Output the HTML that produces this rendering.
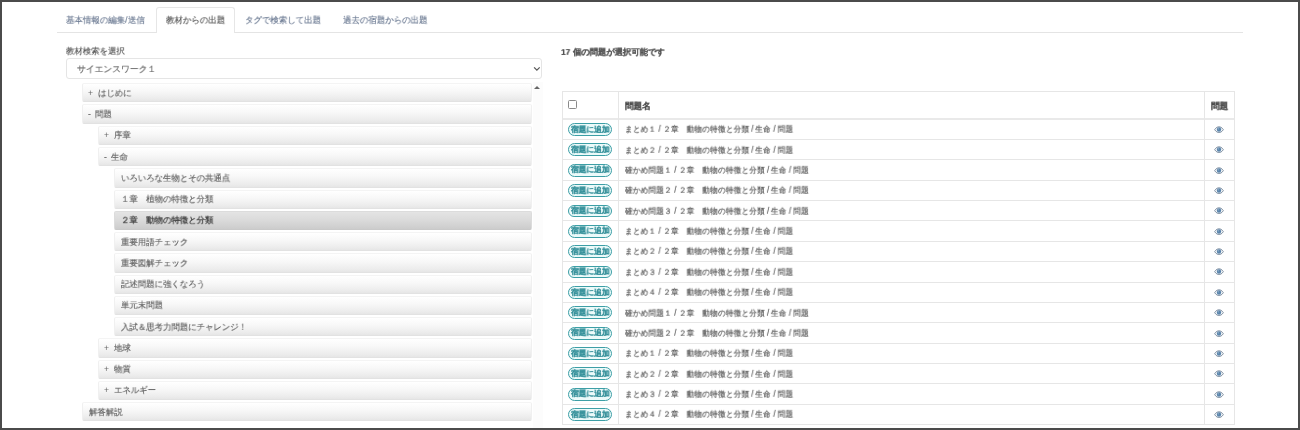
<!DOCTYPE html><html><head><meta charset="utf-8"><style>
*{box-sizing:border-box;margin:0;padding:0}
html,body{width:1300px;height:430px;overflow:hidden;background:#fff}
body{font-family:"Liberation Sans",sans-serif;position:relative;color:#555}
#frame{position:absolute;left:0;top:0;width:1300px;height:430px;border:2px solid #4b4b4b;z-index:10}
.a{position:absolute;white-space:nowrap;line-height:12px}
.a svg{display:block}
.tx{display:block;transform-origin:0 50%;white-space:nowrap;line-height:12px;will-change:transform;-webkit-text-stroke:0.15px currentColor}
#tabline{position:absolute;left:57px;top:32px;width:1186px;height:1px;background:#e4e4e4}

#acttab{position:absolute;left:156.4px;top:7.4px;width:78.2px;height:25.6px;border:1px solid #e6e6e6;border-bottom:none;border-radius:3px 3px 0 0;background:#fff}
#sel{position:absolute;left:66px;top:57.5px;width:476px;height:21px;border:1px solid #e5e5e5;border-radius:3px;background:#fff}
.item{position:absolute;height:19.3px;right:768.4px;border-radius:2px;border:1px solid #f0f0f0;border-top-color:#f4f4f4;border-bottom-color:#e2e2e2;
 background:linear-gradient(#ffffff,#f8f8f8 40%,#ececec 85%,#e6e6e6)}
.item.sel{background:linear-gradient(#e4e4e4,#dadada 50%,#cccccc);border-color:#dcdcdc;border-bottom-color:#c9c9c9}
#track{position:absolute;left:532.5px;top:82px;width:10px;height:346px;background:#fcfcfc}
#scrollup{position:absolute;left:533.8px;top:85.6px;width:0;height:0;border-left:3.2px solid transparent;border-right:3.2px solid transparent;border-bottom:3.4px solid #666}
.hl{position:absolute;height:1px;background:#e6e6e6}
.vl{position:absolute;width:1px;background:#e6e6e6}
.cb{position:absolute;left:568px;top:100.1px;width:9px;height:9px;border:1px solid #8a8a8a;border-radius:1.5px}
.btn{position:absolute;left:568.4px;width:43.5px;height:12.8px;border:1.7px solid #3d9fa6;border-radius:7px;background:#ecfafa}
</style></head><body>
<div id="frame"></div>
<div id="tabline"></div><div id="acttab"></div>
<div class="a" style="left:66.45px;top:14px;color:#67768f"><span class="tx" style="font-size:9px;transform:scale(0.9389,0.9389)">基本情報の編集/送信</span></div>
<div class="a" style="left:165.92px;top:14px;color:#555"><span class="tx" style="font-size:9px;transform:scale(0.9389,0.9389)">教材からの出題</span></div>
<div class="a" style="left:245.10px;top:14px;color:#67768f"><span class="tx" style="font-size:9px;transform:scale(0.9389,0.9389)">タグで検索して出題</span></div>
<div class="a" style="left:342.75px;top:14px;color:#67768f"><span class="tx" style="font-size:9px;transform:scale(0.9389,0.9389)">過去の宿題からの出題</span></div>
<div class="a" style="left:65.72px;top:45px;color:#555"><span class="tx" style="font-size:9px;transform:scale(0.9333,0.9333)">教材検索を選択</span></div>
<div id="sel"></div>
<div class="a" style="left:76.95px;top:62.6px;color:#6a6a6a"><span class="tx" style="font-size:9px;transform:scale(0.9778,0.9778)">サイエンスワーク１</span></div>
<svg class="a" style="left:532.5px;top:65.5px" width="8" height="6" viewBox="0 0 8 6"><path d="M1.1 1.4 L3.9 4.1 L6.7 1.4" fill="none" stroke="#5a5a5a" stroke-width="1.3"/></svg>
<div class="item" style="left:82px;top:83.20px"></div>
<div class="a" style="left:87.60px;top:86.80px;color:#666"><span class="tx" style="font-size:9px;transform:scale(0.9333,0.9333);-webkit-text-stroke:0.05px #666">+</span></div>
<div class="a" style="left:97.50px;top:86.80px;color:#5c5c5c"><span class="tx" style="font-size:9px;transform:scale(0.9333,0.9333)">はじめに</span></div>
<div class="item" style="left:82px;top:104.46px"></div>
<div class="a" style="left:87.60px;top:108.06px;color:#666"><span class="tx" style="font-size:9px;transform:scale(0.9333,0.9333);-webkit-text-stroke:0.05px #666">-</span></div>
<div class="a" style="left:94.50px;top:108.06px;color:#5c5c5c"><span class="tx" style="font-size:9px;transform:scale(0.9333,0.9333)">問題</span></div>
<div class="item" style="left:98px;top:125.72px"></div>
<div class="a" style="left:103.60px;top:129.32px;color:#666"><span class="tx" style="font-size:9px;transform:scale(0.9333,0.9333);-webkit-text-stroke:0.05px #666">+</span></div>
<div class="a" style="left:113.50px;top:129.32px;color:#5c5c5c"><span class="tx" style="font-size:9px;transform:scale(0.9333,0.9333)">序章</span></div>
<div class="item" style="left:98px;top:146.98px"></div>
<div class="a" style="left:103.60px;top:150.58px;color:#666"><span class="tx" style="font-size:9px;transform:scale(0.9333,0.9333);-webkit-text-stroke:0.05px #666">-</span></div>
<div class="a" style="left:110.50px;top:150.58px;color:#5c5c5c"><span class="tx" style="font-size:9px;transform:scale(0.9333,0.9333)">生命</span></div>
<div class="item" style="left:114px;top:168.24px"></div>
<div class="a" style="left:121.00px;top:171.84px;color:#5c5c5c"><span class="tx" style="font-size:9px;transform:scale(0.9333,0.9333)">いろいろな生物とその共通点</span></div>
<div class="item" style="left:114px;top:189.50px"></div>
<div class="a" style="left:121.00px;top:193.10px;color:#5c5c5c"><span class="tx" style="font-size:9px;transform:scale(0.9333,0.9333)">１章　植物の特徴と分類</span></div>
<div class="item sel" style="left:114px;top:210.76px"></div>
<div class="a" style="left:121.00px;top:214.36px;color:#4a4a4a"><span class="tx" style="font-size:9px;transform:scale(0.9333,0.9333);font-weight:bold;-webkit-text-stroke:0">２章　動物の特徴と分類</span></div>
<div class="item" style="left:114px;top:232.02px"></div>
<div class="a" style="left:121.00px;top:235.62px;color:#5c5c5c"><span class="tx" style="font-size:9px;transform:scale(0.9333,0.9333)">重要用語チェック</span></div>
<div class="item" style="left:114px;top:253.28px"></div>
<div class="a" style="left:121.00px;top:256.88px;color:#5c5c5c"><span class="tx" style="font-size:9px;transform:scale(0.9333,0.9333)">重要図解チェック</span></div>
<div class="item" style="left:114px;top:274.54px"></div>
<div class="a" style="left:121.00px;top:278.14px;color:#5c5c5c"><span class="tx" style="font-size:9px;transform:scale(0.9333,0.9333)">記述問題に強くなろう</span></div>
<div class="item" style="left:114px;top:295.80px"></div>
<div class="a" style="left:121.00px;top:299.40px;color:#5c5c5c"><span class="tx" style="font-size:9px;transform:scale(0.9333,0.9333)">単元末問題</span></div>
<div class="item" style="left:114px;top:317.06px"></div>
<div class="a" style="left:121.00px;top:320.66px;color:#5c5c5c"><span class="tx" style="font-size:9px;transform:scale(0.9333,0.9333)">入試＆思考力問題にチャレンジ！</span></div>
<div class="item" style="left:98px;top:338.32px"></div>
<div class="a" style="left:103.60px;top:341.92px;color:#666"><span class="tx" style="font-size:9px;transform:scale(0.9333,0.9333);-webkit-text-stroke:0.05px #666">+</span></div>
<div class="a" style="left:113.50px;top:341.92px;color:#5c5c5c"><span class="tx" style="font-size:9px;transform:scale(0.9333,0.9333)">地球</span></div>
<div class="item" style="left:98px;top:359.58px"></div>
<div class="a" style="left:103.60px;top:363.18px;color:#666"><span class="tx" style="font-size:9px;transform:scale(0.9333,0.9333);-webkit-text-stroke:0.05px #666">+</span></div>
<div class="a" style="left:113.50px;top:363.18px;color:#5c5c5c"><span class="tx" style="font-size:9px;transform:scale(0.9333,0.9333)">物質</span></div>
<div class="item" style="left:98px;top:380.84px"></div>
<div class="a" style="left:103.60px;top:384.44px;color:#666"><span class="tx" style="font-size:9px;transform:scale(0.9333,0.9333);-webkit-text-stroke:0.05px #666">+</span></div>
<div class="a" style="left:113.50px;top:384.44px;color:#5c5c5c"><span class="tx" style="font-size:9px;transform:scale(0.9333,0.9333)">エネルギー</span></div>
<div class="item" style="left:82px;top:402.10px"></div>
<div class="a" style="left:89.00px;top:405.70px;color:#5c5c5c"><span class="tx" style="font-size:9px;transform:scale(0.9333,0.9333)">解答解説</span></div>
<div id="track"></div><div id="scrollup"></div>
<div class="a" style="left:560.80px;top:46.2px;color:#555;font-weight:bold"><span class="tx" style="font-size:9px;transform:scale(0.9256,0.9256)"><span style="color:#333">17</span> 個の問題が選択可能です</span></div>
<div class="hl" style="left:561.5px;top:91.3px;width:673.0999999999999px"></div>
<div class="hl" style="left:561.5px;top:117.9px;width:673.0999999999999px;height:1.8px;background:#e9e9e9"></div>
<div class="hl" style="left:561.5px;top:139.00px;width:673.0999999999999px"></div>
<div class="hl" style="left:561.5px;top:159.37px;width:673.0999999999999px"></div>
<div class="hl" style="left:561.5px;top:179.74px;width:673.0999999999999px"></div>
<div class="hl" style="left:561.5px;top:200.11px;width:673.0999999999999px"></div>
<div class="hl" style="left:561.5px;top:220.48px;width:673.0999999999999px"></div>
<div class="hl" style="left:561.5px;top:240.85px;width:673.0999999999999px"></div>
<div class="hl" style="left:561.5px;top:261.22px;width:673.0999999999999px"></div>
<div class="hl" style="left:561.5px;top:281.59px;width:673.0999999999999px"></div>
<div class="hl" style="left:561.5px;top:301.96px;width:673.0999999999999px"></div>
<div class="hl" style="left:561.5px;top:322.33px;width:673.0999999999999px"></div>
<div class="hl" style="left:561.5px;top:342.70px;width:673.0999999999999px"></div>
<div class="hl" style="left:561.5px;top:363.07px;width:673.0999999999999px"></div>
<div class="hl" style="left:561.5px;top:383.44px;width:673.0999999999999px"></div>
<div class="hl" style="left:561.5px;top:403.81px;width:673.0999999999999px"></div>
<div class="hl" style="left:561.5px;top:424.18px;width:673.0999999999999px"></div>
<div class="vl" style="left:561.5px;top:91.3px;height:333.88px"></div>
<div class="vl" style="left:618.0px;top:91.3px;height:333.88px"></div>
<div class="vl" style="left:1204.0px;top:91.3px;height:333.88px"></div>
<div class="vl" style="left:1233.6px;top:91.3px;height:333.88px"></div>
<div class="cb"></div>
<div class="a" style="left:625.27px;top:100px;color:#4a4a4a;font-weight:bold"><span class="tx" style="font-size:9px;transform:scale(0.9556,0.9556);-webkit-text-stroke:0.05px #4a4a4a">問題名</span></div>
<div class="a" style="left:1210.57px;top:100px;color:#4a4a4a;font-weight:bold"><span class="tx" style="font-size:9px;transform:scale(0.9556,0.9556);-webkit-text-stroke:0.05px #4a4a4a">問題</span></div>
<div class="btn" style="top:123.03px"></div>
<div class="a" style="left:571px;top:123.63px;color:#35909a;font-weight:bold"><span class="tx" style="font-size:8px;transform:scale(0.9650,0.9650);-webkit-text-stroke:0.15px #35909a">宿題に追加</span></div>
<div class="a" style="left:624.7px;top:124.23px;color:#555"><span class="tx" style="font-size:8px;transform:scale(0.9788,1.0375);-webkit-text-stroke:0.16px #555">まとめ１ / ２章　動物の特徴と分類 / 生命 / 問題</span></div>
<div class="a" style="left:1214.2px;top:125.83px"><svg width="10" height="7.3" viewBox="0 0 11 8"><path d="M0.7 4 C2.6 1.2 4.2 0.9 5.5 0.9 C6.8 0.9 8.4 1.2 10.3 4 C8.4 6.8 6.8 7.1 5.5 7.1 C4.2 7.1 2.6 6.8 0.7 4Z" fill="#f4f7fa" stroke="#8393a4" stroke-width="1.1"/><circle cx="5.5" cy="3.8" r="2.4" fill="#5a84ab"/><circle cx="4.8" cy="3.1" r="0.7" fill="#9db6cc"/></svg></div>
<div class="btn" style="top:143.40px"></div>
<div class="a" style="left:571px;top:144.00px;color:#35909a;font-weight:bold"><span class="tx" style="font-size:8px;transform:scale(0.9650,0.9650);-webkit-text-stroke:0.15px #35909a">宿題に追加</span></div>
<div class="a" style="left:624.7px;top:144.60px;color:#555"><span class="tx" style="font-size:8px;transform:scale(0.9788,1.0375);-webkit-text-stroke:0.16px #555">まとめ２ / ２章　動物の特徴と分類 / 生命 / 問題</span></div>
<div class="a" style="left:1214.2px;top:146.20px"><svg width="10" height="7.3" viewBox="0 0 11 8"><path d="M0.7 4 C2.6 1.2 4.2 0.9 5.5 0.9 C6.8 0.9 8.4 1.2 10.3 4 C8.4 6.8 6.8 7.1 5.5 7.1 C4.2 7.1 2.6 6.8 0.7 4Z" fill="#f4f7fa" stroke="#8393a4" stroke-width="1.1"/><circle cx="5.5" cy="3.8" r="2.4" fill="#5a84ab"/><circle cx="4.8" cy="3.1" r="0.7" fill="#9db6cc"/></svg></div>
<div class="btn" style="top:163.77px"></div>
<div class="a" style="left:571px;top:164.37px;color:#35909a;font-weight:bold"><span class="tx" style="font-size:8px;transform:scale(0.9650,0.9650);-webkit-text-stroke:0.15px #35909a">宿題に追加</span></div>
<div class="a" style="left:624.7px;top:164.97px;color:#555"><span class="tx" style="font-size:8px;transform:scale(0.9788,1.0375);-webkit-text-stroke:0.16px #555">確かめ問題１ / ２章　動物の特徴と分類 / 生命 / 問題</span></div>
<div class="a" style="left:1214.2px;top:166.57px"><svg width="10" height="7.3" viewBox="0 0 11 8"><path d="M0.7 4 C2.6 1.2 4.2 0.9 5.5 0.9 C6.8 0.9 8.4 1.2 10.3 4 C8.4 6.8 6.8 7.1 5.5 7.1 C4.2 7.1 2.6 6.8 0.7 4Z" fill="#f4f7fa" stroke="#8393a4" stroke-width="1.1"/><circle cx="5.5" cy="3.8" r="2.4" fill="#5a84ab"/><circle cx="4.8" cy="3.1" r="0.7" fill="#9db6cc"/></svg></div>
<div class="btn" style="top:184.14px"></div>
<div class="a" style="left:571px;top:184.74px;color:#35909a;font-weight:bold"><span class="tx" style="font-size:8px;transform:scale(0.9650,0.9650);-webkit-text-stroke:0.15px #35909a">宿題に追加</span></div>
<div class="a" style="left:624.7px;top:185.34px;color:#555"><span class="tx" style="font-size:8px;transform:scale(0.9788,1.0375);-webkit-text-stroke:0.16px #555">確かめ問題２ / ２章　動物の特徴と分類 / 生命 / 問題</span></div>
<div class="a" style="left:1214.2px;top:186.94px"><svg width="10" height="7.3" viewBox="0 0 11 8"><path d="M0.7 4 C2.6 1.2 4.2 0.9 5.5 0.9 C6.8 0.9 8.4 1.2 10.3 4 C8.4 6.8 6.8 7.1 5.5 7.1 C4.2 7.1 2.6 6.8 0.7 4Z" fill="#f4f7fa" stroke="#8393a4" stroke-width="1.1"/><circle cx="5.5" cy="3.8" r="2.4" fill="#5a84ab"/><circle cx="4.8" cy="3.1" r="0.7" fill="#9db6cc"/></svg></div>
<div class="btn" style="top:204.51px"></div>
<div class="a" style="left:571px;top:205.11px;color:#35909a;font-weight:bold"><span class="tx" style="font-size:8px;transform:scale(0.9650,0.9650);-webkit-text-stroke:0.15px #35909a">宿題に追加</span></div>
<div class="a" style="left:624.7px;top:205.71px;color:#555"><span class="tx" style="font-size:8px;transform:scale(0.9788,1.0375);-webkit-text-stroke:0.16px #555">確かめ問題３ / ２章　動物の特徴と分類 / 生命 / 問題</span></div>
<div class="a" style="left:1214.2px;top:207.31px"><svg width="10" height="7.3" viewBox="0 0 11 8"><path d="M0.7 4 C2.6 1.2 4.2 0.9 5.5 0.9 C6.8 0.9 8.4 1.2 10.3 4 C8.4 6.8 6.8 7.1 5.5 7.1 C4.2 7.1 2.6 6.8 0.7 4Z" fill="#f4f7fa" stroke="#8393a4" stroke-width="1.1"/><circle cx="5.5" cy="3.8" r="2.4" fill="#5a84ab"/><circle cx="4.8" cy="3.1" r="0.7" fill="#9db6cc"/></svg></div>
<div class="btn" style="top:224.88px"></div>
<div class="a" style="left:571px;top:225.48px;color:#35909a;font-weight:bold"><span class="tx" style="font-size:8px;transform:scale(0.9650,0.9650);-webkit-text-stroke:0.15px #35909a">宿題に追加</span></div>
<div class="a" style="left:624.7px;top:226.08px;color:#555"><span class="tx" style="font-size:8px;transform:scale(0.9788,1.0375);-webkit-text-stroke:0.16px #555">まとめ１ / ２章　動物の特徴と分類 / 生命 / 問題</span></div>
<div class="a" style="left:1214.2px;top:227.68px"><svg width="10" height="7.3" viewBox="0 0 11 8"><path d="M0.7 4 C2.6 1.2 4.2 0.9 5.5 0.9 C6.8 0.9 8.4 1.2 10.3 4 C8.4 6.8 6.8 7.1 5.5 7.1 C4.2 7.1 2.6 6.8 0.7 4Z" fill="#f4f7fa" stroke="#8393a4" stroke-width="1.1"/><circle cx="5.5" cy="3.8" r="2.4" fill="#5a84ab"/><circle cx="4.8" cy="3.1" r="0.7" fill="#9db6cc"/></svg></div>
<div class="btn" style="top:245.25px"></div>
<div class="a" style="left:571px;top:245.85px;color:#35909a;font-weight:bold"><span class="tx" style="font-size:8px;transform:scale(0.9650,0.9650);-webkit-text-stroke:0.15px #35909a">宿題に追加</span></div>
<div class="a" style="left:624.7px;top:246.45px;color:#555"><span class="tx" style="font-size:8px;transform:scale(0.9788,1.0375);-webkit-text-stroke:0.16px #555">まとめ２ / ２章　動物の特徴と分類 / 生命 / 問題</span></div>
<div class="a" style="left:1214.2px;top:248.05px"><svg width="10" height="7.3" viewBox="0 0 11 8"><path d="M0.7 4 C2.6 1.2 4.2 0.9 5.5 0.9 C6.8 0.9 8.4 1.2 10.3 4 C8.4 6.8 6.8 7.1 5.5 7.1 C4.2 7.1 2.6 6.8 0.7 4Z" fill="#f4f7fa" stroke="#8393a4" stroke-width="1.1"/><circle cx="5.5" cy="3.8" r="2.4" fill="#5a84ab"/><circle cx="4.8" cy="3.1" r="0.7" fill="#9db6cc"/></svg></div>
<div class="btn" style="top:265.62px"></div>
<div class="a" style="left:571px;top:266.22px;color:#35909a;font-weight:bold"><span class="tx" style="font-size:8px;transform:scale(0.9650,0.9650);-webkit-text-stroke:0.15px #35909a">宿題に追加</span></div>
<div class="a" style="left:624.7px;top:266.82px;color:#555"><span class="tx" style="font-size:8px;transform:scale(0.9788,1.0375);-webkit-text-stroke:0.16px #555">まとめ３ / ２章　動物の特徴と分類 / 生命 / 問題</span></div>
<div class="a" style="left:1214.2px;top:268.42px"><svg width="10" height="7.3" viewBox="0 0 11 8"><path d="M0.7 4 C2.6 1.2 4.2 0.9 5.5 0.9 C6.8 0.9 8.4 1.2 10.3 4 C8.4 6.8 6.8 7.1 5.5 7.1 C4.2 7.1 2.6 6.8 0.7 4Z" fill="#f4f7fa" stroke="#8393a4" stroke-width="1.1"/><circle cx="5.5" cy="3.8" r="2.4" fill="#5a84ab"/><circle cx="4.8" cy="3.1" r="0.7" fill="#9db6cc"/></svg></div>
<div class="btn" style="top:285.99px"></div>
<div class="a" style="left:571px;top:286.59px;color:#35909a;font-weight:bold"><span class="tx" style="font-size:8px;transform:scale(0.9650,0.9650);-webkit-text-stroke:0.15px #35909a">宿題に追加</span></div>
<div class="a" style="left:624.7px;top:287.19px;color:#555"><span class="tx" style="font-size:8px;transform:scale(0.9788,1.0375);-webkit-text-stroke:0.16px #555">まとめ４ / ２章　動物の特徴と分類 / 生命 / 問題</span></div>
<div class="a" style="left:1214.2px;top:288.79px"><svg width="10" height="7.3" viewBox="0 0 11 8"><path d="M0.7 4 C2.6 1.2 4.2 0.9 5.5 0.9 C6.8 0.9 8.4 1.2 10.3 4 C8.4 6.8 6.8 7.1 5.5 7.1 C4.2 7.1 2.6 6.8 0.7 4Z" fill="#f4f7fa" stroke="#8393a4" stroke-width="1.1"/><circle cx="5.5" cy="3.8" r="2.4" fill="#5a84ab"/><circle cx="4.8" cy="3.1" r="0.7" fill="#9db6cc"/></svg></div>
<div class="btn" style="top:306.36px"></div>
<div class="a" style="left:571px;top:306.96px;color:#35909a;font-weight:bold"><span class="tx" style="font-size:8px;transform:scale(0.9650,0.9650);-webkit-text-stroke:0.15px #35909a">宿題に追加</span></div>
<div class="a" style="left:624.7px;top:307.56px;color:#555"><span class="tx" style="font-size:8px;transform:scale(0.9788,1.0375);-webkit-text-stroke:0.16px #555">確かめ問題１ / ２章　動物の特徴と分類 / 生命 / 問題</span></div>
<div class="a" style="left:1214.2px;top:309.16px"><svg width="10" height="7.3" viewBox="0 0 11 8"><path d="M0.7 4 C2.6 1.2 4.2 0.9 5.5 0.9 C6.8 0.9 8.4 1.2 10.3 4 C8.4 6.8 6.8 7.1 5.5 7.1 C4.2 7.1 2.6 6.8 0.7 4Z" fill="#f4f7fa" stroke="#8393a4" stroke-width="1.1"/><circle cx="5.5" cy="3.8" r="2.4" fill="#5a84ab"/><circle cx="4.8" cy="3.1" r="0.7" fill="#9db6cc"/></svg></div>
<div class="btn" style="top:326.73px"></div>
<div class="a" style="left:571px;top:327.33px;color:#35909a;font-weight:bold"><span class="tx" style="font-size:8px;transform:scale(0.9650,0.9650);-webkit-text-stroke:0.15px #35909a">宿題に追加</span></div>
<div class="a" style="left:624.7px;top:327.93px;color:#555"><span class="tx" style="font-size:8px;transform:scale(0.9788,1.0375);-webkit-text-stroke:0.16px #555">確かめ問題２ / ２章　動物の特徴と分類 / 生命 / 問題</span></div>
<div class="a" style="left:1214.2px;top:329.53px"><svg width="10" height="7.3" viewBox="0 0 11 8"><path d="M0.7 4 C2.6 1.2 4.2 0.9 5.5 0.9 C6.8 0.9 8.4 1.2 10.3 4 C8.4 6.8 6.8 7.1 5.5 7.1 C4.2 7.1 2.6 6.8 0.7 4Z" fill="#f4f7fa" stroke="#8393a4" stroke-width="1.1"/><circle cx="5.5" cy="3.8" r="2.4" fill="#5a84ab"/><circle cx="4.8" cy="3.1" r="0.7" fill="#9db6cc"/></svg></div>
<div class="btn" style="top:347.10px"></div>
<div class="a" style="left:571px;top:347.70px;color:#35909a;font-weight:bold"><span class="tx" style="font-size:8px;transform:scale(0.9650,0.9650);-webkit-text-stroke:0.15px #35909a">宿題に追加</span></div>
<div class="a" style="left:624.7px;top:348.30px;color:#555"><span class="tx" style="font-size:8px;transform:scale(0.9788,1.0375);-webkit-text-stroke:0.16px #555">まとめ１ / ２章　動物の特徴と分類 / 生命 / 問題</span></div>
<div class="a" style="left:1214.2px;top:349.90px"><svg width="10" height="7.3" viewBox="0 0 11 8"><path d="M0.7 4 C2.6 1.2 4.2 0.9 5.5 0.9 C6.8 0.9 8.4 1.2 10.3 4 C8.4 6.8 6.8 7.1 5.5 7.1 C4.2 7.1 2.6 6.8 0.7 4Z" fill="#f4f7fa" stroke="#8393a4" stroke-width="1.1"/><circle cx="5.5" cy="3.8" r="2.4" fill="#5a84ab"/><circle cx="4.8" cy="3.1" r="0.7" fill="#9db6cc"/></svg></div>
<div class="btn" style="top:367.47px"></div>
<div class="a" style="left:571px;top:368.07px;color:#35909a;font-weight:bold"><span class="tx" style="font-size:8px;transform:scale(0.9650,0.9650);-webkit-text-stroke:0.15px #35909a">宿題に追加</span></div>
<div class="a" style="left:624.7px;top:368.67px;color:#555"><span class="tx" style="font-size:8px;transform:scale(0.9788,1.0375);-webkit-text-stroke:0.16px #555">まとめ２ / ２章　動物の特徴と分類 / 生命 / 問題</span></div>
<div class="a" style="left:1214.2px;top:370.27px"><svg width="10" height="7.3" viewBox="0 0 11 8"><path d="M0.7 4 C2.6 1.2 4.2 0.9 5.5 0.9 C6.8 0.9 8.4 1.2 10.3 4 C8.4 6.8 6.8 7.1 5.5 7.1 C4.2 7.1 2.6 6.8 0.7 4Z" fill="#f4f7fa" stroke="#8393a4" stroke-width="1.1"/><circle cx="5.5" cy="3.8" r="2.4" fill="#5a84ab"/><circle cx="4.8" cy="3.1" r="0.7" fill="#9db6cc"/></svg></div>
<div class="btn" style="top:387.84px"></div>
<div class="a" style="left:571px;top:388.44px;color:#35909a;font-weight:bold"><span class="tx" style="font-size:8px;transform:scale(0.9650,0.9650);-webkit-text-stroke:0.15px #35909a">宿題に追加</span></div>
<div class="a" style="left:624.7px;top:389.04px;color:#555"><span class="tx" style="font-size:8px;transform:scale(0.9788,1.0375);-webkit-text-stroke:0.16px #555">まとめ３ / ２章　動物の特徴と分類 / 生命 / 問題</span></div>
<div class="a" style="left:1214.2px;top:390.64px"><svg width="10" height="7.3" viewBox="0 0 11 8"><path d="M0.7 4 C2.6 1.2 4.2 0.9 5.5 0.9 C6.8 0.9 8.4 1.2 10.3 4 C8.4 6.8 6.8 7.1 5.5 7.1 C4.2 7.1 2.6 6.8 0.7 4Z" fill="#f4f7fa" stroke="#8393a4" stroke-width="1.1"/><circle cx="5.5" cy="3.8" r="2.4" fill="#5a84ab"/><circle cx="4.8" cy="3.1" r="0.7" fill="#9db6cc"/></svg></div>
<div class="btn" style="top:408.21px"></div>
<div class="a" style="left:571px;top:408.81px;color:#35909a;font-weight:bold"><span class="tx" style="font-size:8px;transform:scale(0.9650,0.9650);-webkit-text-stroke:0.15px #35909a">宿題に追加</span></div>
<div class="a" style="left:624.7px;top:409.41px;color:#555"><span class="tx" style="font-size:8px;transform:scale(0.9788,1.0375);-webkit-text-stroke:0.16px #555">まとめ４ / ２章　動物の特徴と分類 / 生命 / 問題</span></div>
<div class="a" style="left:1214.2px;top:411.01px"><svg width="10" height="7.3" viewBox="0 0 11 8"><path d="M0.7 4 C2.6 1.2 4.2 0.9 5.5 0.9 C6.8 0.9 8.4 1.2 10.3 4 C8.4 6.8 6.8 7.1 5.5 7.1 C4.2 7.1 2.6 6.8 0.7 4Z" fill="#f4f7fa" stroke="#8393a4" stroke-width="1.1"/><circle cx="5.5" cy="3.8" r="2.4" fill="#5a84ab"/><circle cx="4.8" cy="3.1" r="0.7" fill="#9db6cc"/></svg></div>
</body></html>
